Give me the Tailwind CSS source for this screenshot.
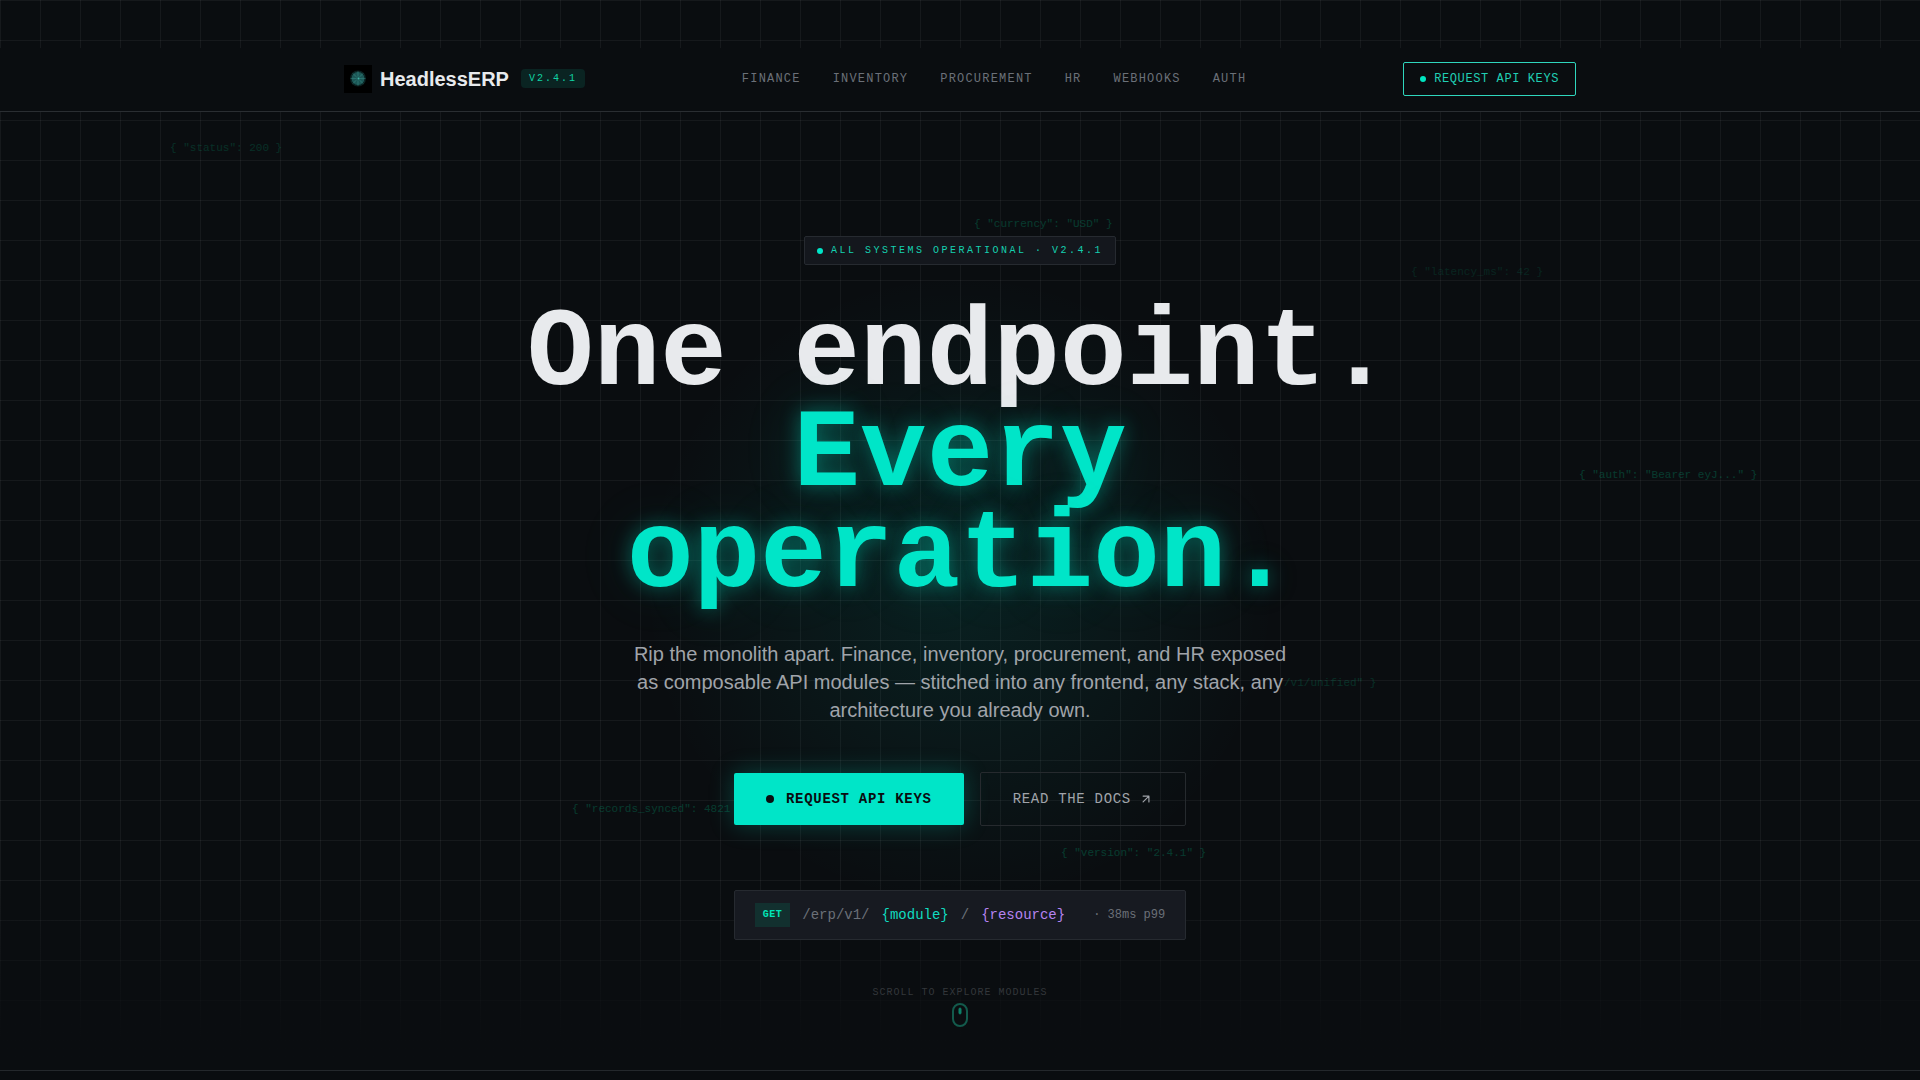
<!DOCTYPE html>
<html lang="en">
<head>
  <meta charset="UTF-8" />
  <meta name="viewport" content="width=device-width, initial-scale=1.0" />
  <title>HeadlessERP</title>
  <script src="https://cdn.jsdelivr.net/npm/@tailwindcss/browser@4"></script>
</head>
<body class="min-h-screen overflow-x-hidden bg-[#0a0d10] text-[#e8eaed] font-['Liberation_Sans',Arial,sans-serif]">
  <div class="relative isolate overflow-hidden border-b border-[#24282c]">
    <!-- Background: grid, glow, bottom fade -->
    <div class="absolute inset-0 -z-10 bg-[linear-gradient(to_right,rgba(255,255,255,0.05)_1px,transparent_1px),linear-gradient(to_bottom,rgba(255,255,255,0.05)_1px,transparent_1px)] bg-[size:40px_40px]"></div>
    <div class="absolute left-1/2 top-[270px] -z-10 h-[640px] w-[640px] -translate-x-1/2 bg-[radial-gradient(circle,rgba(0,229,204,0.09)_0%,rgba(0,229,204,0.04)_40%,transparent_70%)]"></div>
    <div class="absolute inset-x-0 bottom-0 -z-10 h-48 bg-linear-to-t from-[#0a0d10] from-15% to-transparent"></div>

    <!-- Floating JSON fragments -->
    <div class="pointer-events-none absolute inset-0 -z-10 font-['Liberation_Mono',monospace] text-[11px] leading-4 whitespace-pre text-[#00e8a8]" aria-hidden="true">
      <span class="absolute left-[170px] top-[140px] opacity-15">{ "status": 200 }</span>
      <span class="absolute left-[974px] top-[216px] opacity-20">{ "currency": "USD" }</span>
      <span class="absolute left-[1411px] top-[264px] opacity-10">{ "latency_ms": 42 }</span>
      <span class="absolute left-[1579px] top-[467px] opacity-20">{ "auth": "Bearer eyJ..." }</span>
      <span class="absolute left-[1284px] top-[675px] opacity-15">/v1/unified" }</span>
      <span class="absolute left-[572px] top-[801px] opacity-20">{ "records_synced": 4821</span>
      <span class="absolute left-[1061px] top-[845px] opacity-20">{ "version": "2.4.1" }</span>
    </div>

    <header class="mt-12 border-b border-[#2a2e32] bg-[#0a0d10] pb-0.5">
      <div class="mx-auto flex h-[61px] max-w-7xl items-center justify-between px-6">
        <a href="#" class="flex items-center gap-2">
          <svg class="size-7 bg-black" viewBox="0 0 28 28" fill="none" aria-hidden="true">
            <circle cx="14" cy="13.500" r="8" fill="#1d5c5c" opacity="0.35" />
            <circle cx="14" cy="13.500" r="6.500" fill="#236a68" opacity="0.8" />
            <g stroke="#3f9c96" stroke-width="0.600" opacity="0.6">
              <path d="M14 6v15M6.500 13.500h15M8.700 8.200l10.600 10.600M19.300 8.200L8.700 18.800" />
              <path d="M11 7l6 13M17 7l-6 13M7.500 10.500l13 6M7.500 16.500l13-6" stroke="#16494a" />
            </g>
            <circle cx="14.500" cy="13.500" r="1" fill="#3fb0a2" />
          </svg>
          <span class="text-xl font-bold">HeadlessERP</span>
          <span class="ml-1 rounded-sm bg-[#0a2422] px-2 py-0.5 font-['Liberation_Mono',monospace] text-[10px] leading-[15px] tracking-[0.2em] text-[#10d3a4]">V2.4.1</span>
        </a>

        <nav class="flex gap-8 font-['Liberation_Mono',monospace] text-xs tracking-widest text-[#6b7078]">
          <a href="#finance">FINANCE</a>
          <a href="#inventory">INVENTORY</a>
          <a href="#procurement">PROCUREMENT</a>
          <a href="#hr">HR</a>
          <a href="#webhooks">WEBHOOKS</a>
          <a href="#auth">AUTH</a>
        </nav>

        <button type="button" class="flex items-center gap-2 rounded-xs border border-[#2fd6bd] px-4 py-2 font-['Liberation_Mono',monospace] text-xs tracking-wider text-[#20cfb4]">
          <span class="size-1.5 rounded-full bg-[#00e5c0]"></span>
          REQUEST API KEYS
        </button>
      </div>
    </header>

    <main class="flex flex-col items-center px-6 pt-[124px] pb-[43px] font-['Liberation_Mono',monospace]">
      <div class="flex items-center gap-2 rounded-xs border border-[#262a30] bg-[#14171d] px-3 py-1.5 text-[10px] leading-[15px] tracking-[0.25em] text-[#14d0b0]">
        <span class="size-1.5 rounded-full bg-[#00e5c8]"></span>
        ALL SYSTEMS OPERATIONAL · V2.4.1
      </div>

      <h1 class="mt-[39px] max-w-4xl text-center text-[111px] leading-[101px] font-bold">
        One endpoint.<br />
        <span class="text-[#00e5c8] [text-shadow:0_0_20px_rgba(0,229,200,0.4),0_0_60px_rgba(0,229,200,0.15)]">Every<br />operation.</span>
      </h1>

      <p class="mt-[33px] max-w-2xl text-center font-['Liberation_Sans',Arial,sans-serif] text-xl leading-7 text-[#a0a4aa]">
        Rip the monolith apart. Finance, inventory, procurement, and HR exposed as composable API modules — stitched into any frontend, any stack, any architecture you already own.
      </p>

      <div class="mt-12 flex items-center gap-4 text-sm tracking-wider">
        <button type="button" class="flex items-center gap-3 rounded-xs bg-[#00e5c8] px-8 py-4 font-bold text-[#0a0d10] shadow-[0_0_24px_rgba(0,229,200,0.25)]">
          <span class="size-2 rounded-full bg-[#0a0d10]"></span>
          REQUEST API KEYS
        </button>
        <a href="#docs" class="flex items-center gap-2 rounded-xs border border-[#262a2e] px-8 py-4 text-[#a0a4aa]">
          READ THE DOCS
          <svg class="size-3.5" viewBox="0 0 24 24" fill="none" stroke="currentColor" stroke-width="2" stroke-linecap="round" stroke-linejoin="round" aria-hidden="true">
            <path d="M7 7h10v10M7 17 17 7" />
          </svg>
        </a>
      </div>

      <!-- Endpoint preview -->
      <div class="mt-16 flex items-center gap-3 rounded-xs border border-[#262a30] bg-[#171a21] px-5 py-3 text-sm">
        <span class="bg-[#12302f] px-2 py-1 text-[10px] leading-4 font-bold tracking-wider text-[#00e5b8]">GET</span>
        <span class="text-[#6b7078]">/erp/v1/</span>
        <span class="text-[#10dcc0]">{module}</span>
        <span class="text-[#6b7078]">/</span>
        <span class="text-[#b583f0]">{resource}</span>
        <span class="ml-4 text-xs text-[#6b7078]">· 38ms p99</span>
      </div>

      <div class="mt-[45px] flex flex-col items-center gap-[3px] text-[10px] leading-[15px] tracking-widest text-[#33373b]">
        SCROLL TO EXPLORE MODULES
        <svg class="h-6 w-4" viewBox="0 0 16 24" fill="none" aria-hidden="true">
          <rect x="1" y="1" width="14" height="22" rx="7" stroke="#135a4c" stroke-width="2" />
          <rect x="7" y="5" width="2" height="6" rx="1" fill="#0d8068" stroke="#0d8068" />
        </svg>
      </div>
    </main>
  </div>
</body>
</html>
